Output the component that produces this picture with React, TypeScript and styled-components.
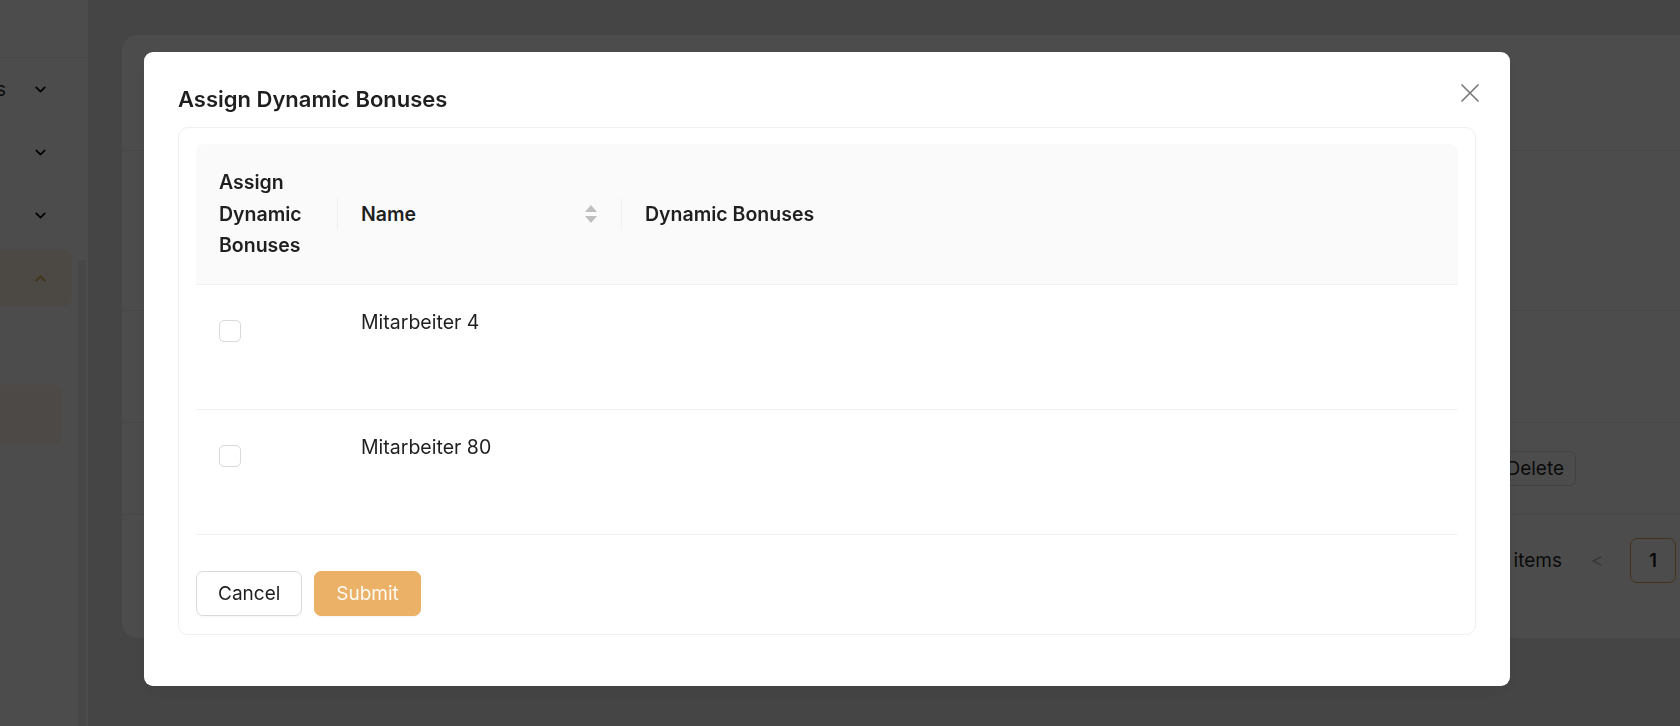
import styled, { createGlobalStyle } from 'styled-components';
import { ChevronDown, ChevronUp } from 'lucide-react';

const GlobalStyle = createGlobalStyle`
  html, body {
    margin: 0;
    height: 100%;
    overflow: hidden;
  }
  body {
    font-family: Inter, 'Liberation Sans', sans-serif;
    color: rgba(0, 0, 0, 0.88);
  }
  #root {
    height: 100%;
  }
`;

const employees = [
  { id: 4, name: 'Mitarbeiter 4' },
  { id: 80, name: 'Mitarbeiter 80' },
];

const navItems = [
  { key: 'bonuses', label: 'Bonuses', open: false },
  { key: 'staff', label: '', open: false },
  { key: 'reports', label: '', open: false },
  { key: 'dynamic', label: '', open: true },
];

const SortIcon = () => (
  <svg width="12" height="18" viewBox="0 0 12 18">
    <path d="M6 0 L12 7 H0 Z" fill="#bfbfbf" />
    <path d="M0 11 H12 L6 18 Z" fill="#bfbfbf" />
  </svg>
);

const CloseIcon = () => (
  <svg width="18" height="18" viewBox="0 0 18 18" fill="none">
    <path d="M1 1 L17 17 M17 1 L1 17" stroke="#7a7a7a" strokeWidth="1.7" strokeLinecap="round" />
  </svg>
);

const App = () => (
  <>
    <GlobalStyle />
    <Page>
      <Sidebar>
        <SidebarTop />
        <NavList>
          {navItems.map(({ key, label, open }) => (
            <NavItem key={key} $active={open}>
              {label && <NavLabel>{label}</NavLabel>}
              {open ? (
                <ChevronUp size={17} strokeWidth={2.4} color="#e8a64f" />
              ) : (
                <ChevronDown size={17} strokeWidth={2.4} color="#000" />
              )}
            </NavItem>
          ))}
          <SubItem />
        </NavList>
        <ScrollThumb />
      </Sidebar>
      <Main>
        <Card>
          <CardSection $height={115} />
          <CardSection $height={159} />
          <CardSection $height={111} />
          <CardToolbar>
            <GhostButton>Delete</GhostButton>
          </CardToolbar>
          <Pagination>
            <PageInfo>2 items</PageInfo>
            <PageArrow>&lt;</PageArrow>
            <PageNumber>1</PageNumber>
            <PageArrow>&gt;</PageArrow>
          </Pagination>
        </Card>
      </Main>
    </Page>

    <Mask />
    <ModalWrap>
      <Modal>
        <CloseButton aria-label="Close">
          <CloseIcon />
        </CloseButton>
        <ModalTitle>Assign Dynamic Bonuses</ModalTitle>
        <ModalCard>
          <Table>
            <colgroup>
              <col style={{ width: 142 }} />
              <col style={{ width: 284 }} />
              <col />
            </colgroup>
            <thead>
              <tr>
                <Th $divider>Assign Dynamic Bonuses</Th>
                <Th $divider>
                  <SortHeader>
                    Name
                    <SortIcon />
                  </SortHeader>
                </Th>
                <Th>Dynamic Bonuses</Th>
              </tr>
            </thead>
            <tbody>
              {employees.map(({ id, name }) => (
                <tr key={id}>
                  <Td>
                    <Checkbox type="checkbox" />
                  </Td>
                  <Td>{name}</Td>
                  <Td />
                </tr>
              ))}
            </tbody>
          </Table>
          <ModalFooter>
            <Button>Cancel</Button>
            <Button $primary>Submit</Button>
          </ModalFooter>
        </ModalCard>
      </Modal>
    </ModalWrap>
  </>
);

export default App;

/* page behind the dialog */

const Page = styled('div')`
  display: grid;
  grid-template-columns: 88px 1fr;
  height: 726px;
  background: #e8e8e8;
`;

const Sidebar = styled('aside')`
  position: relative;
  display: flex;
  flex-direction: column;
  background: #fff;
  overflow: hidden;
`;

const SidebarTop = styled('div')`
  height: 57px;
  flex-shrink: 0;
  border-bottom: 1px solid #eeeeee;
`;

const NavList = styled('nav')`
  display: flex;
  flex-direction: column;
  gap: 7px;
  padding-top: 3px;
`;

const NavItem = styled('div')<{ $active?: boolean }>`
  width: 72px;
  height: 56px;
  display: flex;
  align-items: center;
  justify-content: flex-end;
  gap: 26px;
  padding-right: 23px;
  box-sizing: border-box;
  overflow: hidden;
  border-radius: 0 8px 8px 0;
  background: ${({ $active }) => ($active ? '#fdf3e3' : 'transparent')};
  font-size: 19px;
  white-space: nowrap;

  svg {
    flex-shrink: 0;
  }
`;

const NavLabel = styled('span')`
  flex-shrink: 0;
`;

const SubItem = styled('div')`
  width: 62px;
  height: 60px;
  margin-top: 72px;
  border-radius: 0 8px 8px 0;
  background: #fdf6ea;
`;

const ScrollThumb = styled('div')`
  position: absolute;
  right: 2px;
  top: 260px;
  bottom: 0;
  width: 8px;
  border-radius: 4px 4px 0 0;
  background: rgba(0, 0, 0, 0.07);
`;

const Main = styled('main')`
  padding: 35px 0 0 34px;
  overflow: hidden;
`;

const Card = styled('section')`
  width: 1638px;
  height: 603px;
  background: #fff;
  border-radius: 16px;
  display: flex;
  flex-direction: column;
`;

const CardSection = styled('div')<{ $height: number }>`
  height: ${({ $height }) => $height}px;
  flex-shrink: 0;
  border-bottom: 1px solid #f0f0f0;
`;

const CardToolbar = styled('div')`
  height: 91px;
  display: flex;
  align-items: center;
  justify-content: flex-end;
  padding-right: 184px;
  border-bottom: 1px solid #f0f0f0;
`;

const GhostButton = styled('button')`
  height: 35px;
  padding: 0 11px;
  border: 1px solid #d9d9d9;
  border-radius: 6px;
  background: #fff;
  font: 19px Inter, 'Liberation Sans', sans-serif;
  color: rgba(0, 0, 0, 0.88);
`;

const Pagination = styled('div')`
  display: flex;
  align-items: center;
  justify-content: flex-end;
  gap: 16px;
  padding: 23px 34px 0 0;
  font-size: 19px;
`;

const PageInfo = styled('span')`
  margin-right: 2px;
`;

const PageArrow = styled('span')`
  width: 34px;
  text-align: center;
  color: rgba(0, 0, 0, 0.3);
`;

const PageNumber = styled('span')`
  width: 44px;
  height: 43px;
  display: flex;
  align-items: center;
  justify-content: center;
  border: 1px solid #e8a64f;
  border-radius: 7px;
  font-weight: 600;
`;

/* dialog */

const Mask = styled('div')`
  position: fixed;
  inset: 0;
  background: rgba(0, 0, 0, 0.7);
`;

const ModalWrap = styled('div')`
  position: fixed;
  inset: 0;
  padding: 52px 0 0 144px;
`;

const Modal = styled('div')`
  position: relative;
  width: 1366px;
  box-sizing: border-box;
  padding: 33px 34px 51px;
  background: #fff;
  border-radius: 9px;
  box-shadow: 0 6px 16px rgba(0, 0, 0, 0.08);
`;

const CloseButton = styled('button')`
  position: absolute;
  top: 31px;
  right: 30px;
  width: 20px;
  height: 20px;
  padding: 0;
  border: 0;
  background: none;
  display: flex;
  align-items: center;
  justify-content: center;
`;

const ModalTitle = styled('h2')`
  margin: 0 0 14px;
  font-size: 22px;
  line-height: 28px;
  font-weight: 600;
  color: rgba(0, 0, 0, 0.88);
`;

const ModalCard = styled('div')`
  border: 1px solid #f0f0f0;
  border-radius: 10px;
  padding: 16px 17px 18px;
`;

const Table = styled('table')`
  width: 100%;
  table-layout: fixed;
  border-collapse: separate;
  border-spacing: 0;
  font-size: 19.5px;
`;

const Th = styled('th')<{ $divider?: boolean }>`
  position: relative;
  padding: 23px 23px 22px;
  background: #fafafa;
  border-bottom: 1px solid #f0f0f0;
  text-align: left;
  font-weight: 600;
  line-height: 31.5px;
  vertical-align: middle;

  &:first-child {
    border-top-left-radius: 8px;
  }
  &:last-child {
    border-top-right-radius: 8px;
  }

  &::before {
    content: '';
    display: ${({ $divider }) => ($divider ? 'block' : 'none')};
    position: absolute;
    top: 50%;
    right: 0;
    width: 1px;
    height: 32px;
    transform: translateY(-50%);
    background: #f0f0f0;
  }
`;

const SortHeader = styled('div')`
  display: flex;
  align-items: center;
  justify-content: space-between;
  padding-right: 2px;
`;

const Td = styled('td')`
  height: 125px;
  box-sizing: border-box;
  padding: 24px 23px;
  border-bottom: 1px solid #f0f0f0;
  vertical-align: top;
  line-height: 27px;
`;

const Checkbox = styled('input')`
  appearance: none;
  display: block;
  width: 22px;
  height: 22px;
  margin: 11px 0 0;
  border: 1px solid #d9d9d9;
  border-radius: 5px;
  background: #fff;
`;

const ModalFooter = styled('div')`
  display: flex;
  gap: 12px;
  margin-top: 36px;
`;

const Button = styled('button')<{ $primary?: boolean }>`
  height: 45px;
  padding: 0 21px;
  border-radius: 7px;
  font: 19px Inter, 'Liberation Sans', sans-serif;
  border: 1px solid ${({ $primary }) => ($primary ? '#ebb166' : '#d9d9d9')};
  background: ${({ $primary }) => ($primary ? '#ebb166' : '#fff')};
  color: ${({ $primary }) => ($primary ? 'rgba(255, 255, 255, 0.92)' : 'rgba(0, 0, 0, 0.88)')};
  box-shadow: 0 2px 0 rgba(0, 0, 0, 0.02);
`;
